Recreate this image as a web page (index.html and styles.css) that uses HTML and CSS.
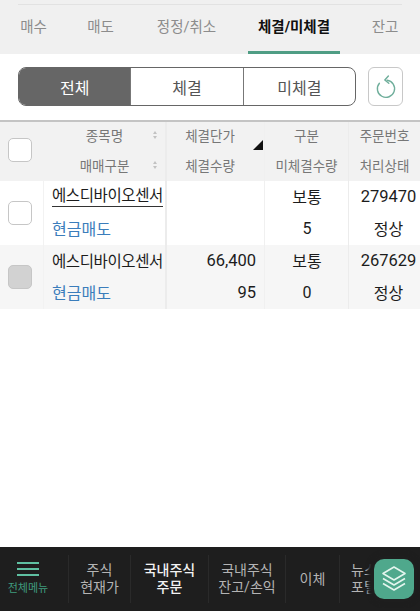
FILE: index.html
```html
<!DOCTYPE html>
<html>
<head>
    <title>체결/미체결</title>
    <link rel="stylesheet" href="styles.css">
</head>
<body>
    <div class="app">
        <div class="tabs">
            <div class="tabs-line"></div>
            <div class="tabs-row">
                <a class="tab tab-buy">매수</a>
                <a class="tab tab-sell">매도</a>
                <a class="tab tab-edit">정정/취소</a>
                <a class="tab tab-fill active">체결/미체결</a>
                <a class="tab tab-bal">잔고</a>
            </div>
        </div>

        <div class="card">
            <div class="filter">
                <div class="segment">
                    <div class="seg-item selected">전체</div>
                    <div class="seg-item">체결</div>
                    <div class="seg-item">미체결</div>
                </div>
                <div class="refresh">
                    <svg width="24" height="26" viewBox="0 0 24 26" fill="none" stroke="#6fae9b" stroke-width="1.4" stroke-linecap="round" stroke-linejoin="round">
                        <path d="M13 6.2a8.6 8.6 0 1 1-7.6 3"/>
                        <path d="M14.4 2l-3.6 4 4 3.2"/>
                    </svg>
                </div>
            </div>

            <!-- order table -->
            <div class="table">
                <div class="row head">
                    <div class="col col-check"><span class="box"></span></div>
                    <div class="col col-name">
                        <div class="cell">종목명<i class="sort"></i></div>
                        <div class="cell">매매구분<i class="sort"></i></div>
                    </div>
                    <div class="col col-price">
                        <div class="cell">체결단가</div>
                        <div class="cell">체결수량</div>
                        <i class="corner"></i>
                    </div>
                    <div class="col col-type">
                        <div class="cell">구분</div>
                        <div class="cell">미체결수량</div>
                    </div>
                    <div class="col col-no">
                        <div class="cell">주문번호</div>
                        <div class="cell">처리상태</div>
                    </div>
                </div>

                <div class="row">
                    <div class="col col-check"><span class="box"></span></div>
                    <div class="col col-name">
                        <div class="cell"><span class="stock linked">에스디바이오센서</span></div>
                        <div class="cell blue">현금매도</div>
                    </div>
                    <div class="col col-price">
                        <div class="cell"></div>
                        <div class="cell"></div>
                    </div>
                    <div class="col col-type">
                        <div class="cell">보통</div>
                        <div class="cell">5</div>
                    </div>
                    <div class="col col-no">
                        <div class="cell">279470</div>
                        <div class="cell">정상</div>
                    </div>
                </div>

                <div class="row odd">
                    <div class="col col-check"><span class="box disabled"></span></div>
                    <div class="col col-name">
                        <div class="cell"><span class="stock">에스디바이오센서</span></div>
                        <div class="cell blue">현금매도</div>
                    </div>
                    <div class="col col-price">
                        <div class="cell">66,400</div>
                        <div class="cell">95</div>
                    </div>
                    <div class="col col-type">
                        <div class="cell">보통</div>
                        <div class="cell">0</div>
                    </div>
                    <div class="col col-no">
                        <div class="cell">267629</div>
                        <div class="cell">정상</div>
                    </div>
                </div>
            </div>
        </div>

        <div class="nav">
            <div class="nav-menu">
                <svg width="24" height="16" viewBox="0 0 24 16" fill="none" stroke="#5fc0a2" stroke-width="2">
                    <path d="M1 2h22M1 8h22M1 14h22"/>
                </svg>
                <span>전체메뉴</span>
            </div>
            <div class="nav-item w-price">주식<br>현재가</div>
            <div class="nav-item w-order current">국내주식<br>주문</div>
            <div class="nav-item w-bal">국내주식<br>잔고/손익</div>
            <div class="nav-item w-move">이체</div>
            <div class="nav-item w-news">뉴스<br>포털</div>
        </div>

        <div class="fab">
            <svg width="30" height="30" viewBox="0 0 30 30" fill="none" stroke="#e4f5ee" stroke-width="1.6" stroke-linejoin="round">
                <path d="M15 3l11 6.5-11 6.5-11-6.5z"/>
                <path d="M4 14.5l11 6.5 11-6.5"/>
                <path d="M4 19.5l11 6.5 11-6.5"/>
            </svg>
        </div>
    </div>
</body>
</html>
```

FILE: styles.css
```css
body {
    margin: 0;
    font-family: Roboto, "Noto Sans CJK KR", sans-serif;
    background-color: #fff;
}
.app {
    position: relative;
    width: 420px;
    height: 611px;
    overflow: hidden;
    display: flex;
    flex-direction: column;
}

/* top tabs */
.tabs {
    height: 54px;
    padding-top: 4px;
    box-sizing: border-box;
    background-color: #f0f0f0;
}
.tabs-line {
    height: 1px;
    margin: 0 18px;
    background-color: #e2e2e2;
}
.tabs-row {
    display: flex;
    height: 49px;
}
.tab {
    display: flex;
    align-items: center;
    justify-content: center;
    box-sizing: border-box;
    padding-bottom: 8px;
    font-size: 14.5px;
    color: #8c8c8c;
}
.tab-buy { width: 67px; }
.tab-sell { width: 67px; }
.tab-edit { width: 114px; padding-right: 9px; }
.tab-fill { width: 92px; }
.tab-bal { flex: 1; padding-left: 10px; }
.tab.active {
    color: #111;
    font-weight: 700;
    border-bottom: 3px solid #4f9d84;
    padding-bottom: 5px;
}

/* card */
.card {
    flex: 1;
    background-color: #fff;
    border-radius: 12px 12px 0 0;
}
.filter {
    display: flex;
    gap: 12px;
    padding: 13px 17px 14px 18px;
}
.segment {
    display: flex;
    width: 338px;
    height: 39px;
    box-sizing: border-box;
    border: 1px solid #666;
    border-radius: 8px;
    overflow: hidden;
}
.seg-item {
    flex: 1;
    display: flex;
    align-items: center;
    justify-content: center;
    font-size: 16px;
    color: #555;
    border-left: 1px solid #777;
}
.seg-item:first-child { border-left: none; }
.seg-item.selected {
    background-color: #666;
    color: #fff;
}
.refresh {
    width: 35px;
    height: 39px;
    box-sizing: border-box;
    display: flex;
    align-items: center;
    justify-content: center;
    border: 1px solid #c8c8c8;
    border-radius: 6px;
}

/* table */
.table {
    border-top: 2px solid #c4c4c4;
}
.row {
    display: flex;
    height: 64px;
    font-size: 16px;
    color: #1c1c1c;
}
.row.head {
    height: 59px;
    background-color: #f2f2f2;
    font-size: 13.5px;
    color: #777;
}
.row.odd { background-color: #f6f6f6; }
.col {
    display: flex;
    flex-direction: column;
    box-sizing: border-box;
    position: relative;
}
.cell {
    flex: none;
    height: 34px;
    display: flex;
    align-items: center;
    justify-content: center;
    white-space: nowrap;
    position: relative;
}
.cell:first-child { height: 30px; }
.head .cell { height: 33px; }
.head .cell:first-child { height: 26px; }
.col-check {
    width: 44px;
    align-items: center;
    justify-content: center;
    padding-right: 3px;
    border-right: 1px solid #f2f2f2;
}
.head .col-check { padding-bottom: 3px; }
.col-name {
    width: 123px;
    border-right: 2px solid #ececec;
}
.col-price {
    width: 98px;
    border-right: 1px solid #f0f0f0;
}
.head .col-price { padding-right: 11px; }
.col-type {
    width: 84px;
    border-right: 1px solid #ececec;
}
.row:not(.head) .col-type { padding-left: 1px; }
.col-no { flex: 1; }

.row:not(.head) .col-name .cell { justify-content: flex-start; padding-left: 8px; }
.row:not(.head) .col-price .cell { justify-content: flex-end; padding-right: 8px; font-size: 16.5px; }
.row:not(.head) .col-no .cell { padding-left: 8px; }
.row:not(.head) .col-no .cell:first-child { font-size: 16.5px; }

.stock {
    font-size: 15.5px;
    letter-spacing: -0.4px;
}
.stock.linked { border-bottom: 1px solid #333; line-height: 20px; }
.blue { color: #3b7dbb; }

.box {
    width: 24px;
    height: 24px;
    box-sizing: border-box;
    background-color: #fff;
    border: 1px solid #c6c6c6;
    border-radius: 5px;
}
.box.disabled {
    background-color: #d2d2d2;
}

/* sort arrows in the header */
.sort {
    position: absolute;
    right: 8px;
    top: 50%;
    margin-top: -4px;
    width: 0;
    height: 0;
    border-left: 2.5px solid transparent;
    border-right: 2.5px solid transparent;
    border-bottom: 3px solid #c2c2c2;
}
.sort::after {
    content: "";
    position: absolute;
    left: -2.5px;
    top: 5px;
    border-left: 2.5px solid transparent;
    border-right: 2.5px solid transparent;
    border-top: 3px solid #c2c2c2;
}
.corner {
    position: absolute;
    right: 1px;
    top: 18px;
    width: 0;
    height: 0;
    border-left: 10px solid transparent;
    border-bottom: 10px solid #111;
}

/* bottom nav */
.nav {
    display: flex;
    height: 64px;
    background-color: #1e1e1e;
    color: #b4b4b4;
    font-size: 14px;
    line-height: 17px;
    text-align: center;
}
.nav-menu {
    width: 68px;
    padding-right: 12px;
    box-sizing: border-box;
    display: flex;
    flex-direction: column;
    align-items: center;
    padding-top: 14px;
    gap: 5px;
    color: #3f9b7e;
    font-size: 11px;
    line-height: 14px;
}
.nav-item {
    display: flex;
    align-items: center;
    justify-content: center;
    box-sizing: border-box;
    margin: 8px 0;
    white-space: nowrap;
    overflow: hidden;
    border-left: 1px solid #2a2a2a;
}
.nav-item.current {
    color: #f2f2f2;
    font-weight: 500;
}
.w-price { width: 62px; }
.w-order { width: 78px; }
.w-bal { width: 77px; }
.w-move { width: 54px; }
.w-news { flex: 1; justify-content: flex-start; padding-left: 11px; }

.fab {
    position: absolute;
    left: 374px;
    top: 559px;
    width: 40px;
    height: 40px;
    display: flex;
    align-items: center;
    justify-content: center;
    background-color: #4fa88c;
    border-radius: 10px;
    box-shadow: 0 0 3px 6px #1e1e1e;
}
```
